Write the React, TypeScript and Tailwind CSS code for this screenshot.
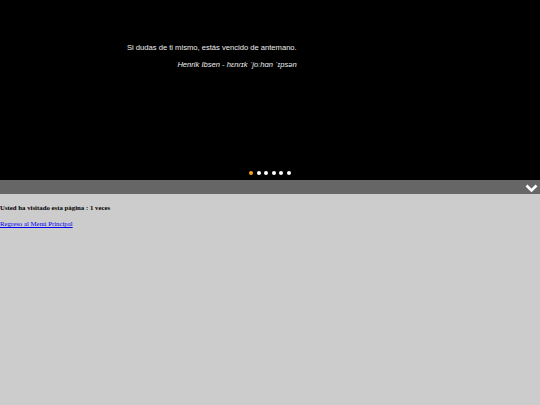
export default function App() {
  const dots = [0, 1, 2, 3, 4, 5];
  return (
    <div className="min-h-[405px] bg-[#cccccc]" style={{ fontFamily: '"Liberation Serif", serif' }}>
      {/* Quote slider */}
      <div className="relative h-[180px] bg-black" style={{ fontFamily: '"Liberation Sans", Arial, sans-serif' }}>
        <div className="flex pl-[127px] pt-[43px]">
          <div className="flex flex-col items-end">
            <p className="text-[7.6px] leading-[10px] text-[#eeeeee]">Si dudas de ti mismo, estás vencido de antemano.</p>
            <p className="mt-[7px] text-[7.6px] italic leading-[10px] text-[#eeeeee]">Henrik Ibsen - hɛnɾɪk ˈjoːhɑn ˈɪpsən</p>
          </div>
        </div>
        <div className="absolute bottom-[5px] left-0 right-0 flex justify-center gap-[3.5px]">
          {dots.map((d) => (
            <span key={d} className={`h-[4px] w-[4px] rounded-full ${d === 0 ? 'bg-[#f5a623]' : 'bg-white'}`} />
          ))}
        </div>
      </div>
      {/* Toggle bar */}
      <div className="flex h-[14px] items-center justify-end bg-[#666666] pr-[2px]">
        <svg width="13" height="9" viewBox="0 0 13 9" className="mt-[3px]">
          <path d="M1.5 1.5 L6.5 6.5 L11.5 1.5" stroke="white" strokeWidth="2.6" fill="none" />
        </svg>
      </div>
      <div className="pt-[9px] text-[6.8px] leading-[10px] text-black">
        <p className="font-bold">Usted ha visitado esta página : 1 veces</p>
        <a href="#" className="mt-[6px] block text-[#0000ee] underline">Regreso al Menú Principal</a>
      </div>
    </div>
  );
}
